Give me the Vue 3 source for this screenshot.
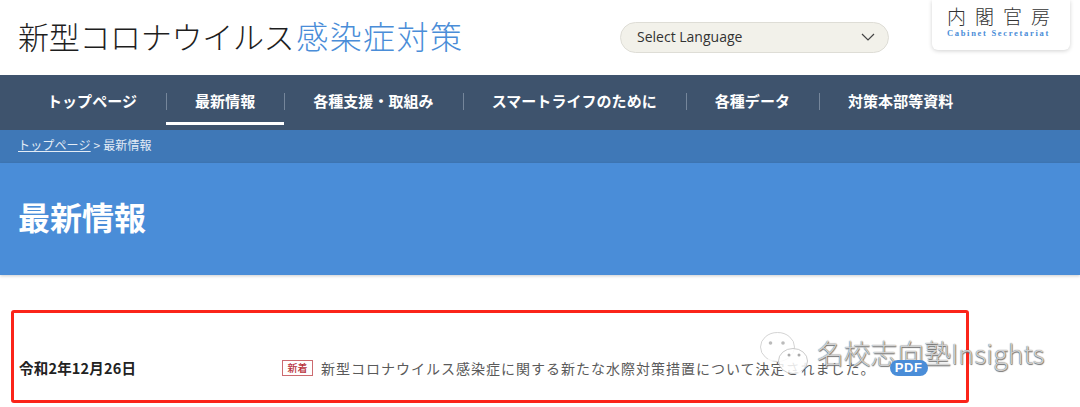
<script setup>
const navItems = [
  { label: 'トップページ' },
  { label: '最新情報', active: true },
  { label: '各種支援・取組み' },
  { label: 'スマートライフのために' },
  { label: '各種データ' },
  { label: '対策本部等資料' }
]
</script>

<template>
  <div class="page">
    <header class="top">
      <h1 class="site-title"><span class="t-dark">新型コロナウイルス</span><span class="t-blue">感染症対策</span></h1>
      <div class="lang">
        <span>Select Language</span>
        <svg width="14" height="8" viewBox="0 0 14 8"><path d="M1 1l6 6 6-6" fill="none" stroke="#444" stroke-width="1.2"/></svg>
      </div>
      <div class="logo">
        <div class="logo-ja">内閣官房</div>
        <div class="logo-en">Cabinet Secretariat</div>
      </div>
    </header>
    <nav class="nav">
      <a v-for="(n, i) in navItems" :key="n.label" class="nav-item" :class="{ active: n.active, first: i === 0 }">{{ n.label }}</a>
    </nav>
    <div class="crumb"><a class="crumb-link">トップページ</a> &gt; 最新情報</div>
    <section class="hero"><h2>最新情報</h2></section>
    <main class="list">
      <div class="date">令和2年12月26日</div>
      <div class="entry">
        <span class="tag">新着</span>
        <span class="entry-text">新型コロナウイルス感染症に関する新たな水際対策措置について決定されました。</span>
        <span class="pdf">PDF</span>
      </div>
    </main>

    <div class="redbox"></div>
    <div class="mark">
      <svg width="52" height="46" viewBox="0 0 52 46">
        <ellipse cx="17.500" cy="16" rx="17" ry="14.500" fill="#fff" fill-opacity=".72" stroke="#c9c9c9" stroke-width=".8"/>
        <path d="M8 27l-1 6 7-4z" fill="#fff" fill-opacity=".72"/>
        <ellipse cx="33" cy="30" rx="14.500" ry="12.500" fill="#fff" fill-opacity=".85" stroke="#bdbdbd" stroke-width=".8"/>
        <path d="M41 39l3 5-8-3z" fill="#fff" fill-opacity=".85"/>
        <circle cx="10.500" cy="12" r="1.800" fill="#bbb"/><circle cx="23" cy="12" r="1.800" fill="#bbb"/>
        <circle cx="29" cy="24" r="1.500" fill="#aaa"/><circle cx="39" cy="24" r="1.500" fill="#aaa"/>
      </svg>
      <span class="mark-text">名校志向塾Insights</span>
    </div>
  </div>
</template>

<style>
html, body { margin: 0; background: #fff; overflow: hidden; }
</style>

<style scoped>
.page {
  position: relative;
  width: 1080px;
  height: 407px;
  overflow: hidden;
  font-family: "Noto Sans CJK JP", "Noto Sans", sans-serif;
  color: #222;
}
.top {
  height: 75px;
  display: flex;
  align-items: flex-start;
  box-sizing: border-box;
  padding-left: 18px;
}
.site-title {
  margin: 12px 0 0;
  width: 602px;
  font-weight: 300;
  line-height: 46px;
  white-space: nowrap;
}
.t-dark { font-size: 31px; letter-spacing: -0.3px; color: #1e1e1e; }
.t-blue { font-size: 32px; letter-spacing: 1.400px; margin-left: 2px; color: #4a8dd8; }
.lang {
  margin-top: 22px;
  width: 269px;
  height: 31px;
  box-sizing: border-box;
  background: #f2f1ea;
  border: 1px solid #deddd6;
  border-radius: 16px;
  padding: 0 13px 2px 16px;
  display: flex;
  align-items: center;
  justify-content: space-between;
  font-family: "Open Sans", "Noto Sans", sans-serif;
  font-size: 14px;
  color: #333;
}
.logo {
  margin-left: 43px;
  width: 138px;
  height: 50px;
  box-sizing: border-box;
  background: #fff;
  border-radius: 0 0 6px 6px;
  box-shadow: 0 1px 4px rgba(0, 0, 0, .18);
  text-align: center;
  padding: 3px 5px 0 0;
}
.logo-ja {
  font-size: 19px;
  line-height: 26px;
  font-weight: 300;
  letter-spacing: 9px;
  margin-right: -9px;
  color: #333;
}
.logo-en {
  font-family: "Liberation Serif", serif;
  font-weight: 700;
  font-size: 8.500px;
  line-height: 9px;
  letter-spacing: 1.700px;
  color: #4a8dd8;
  white-space: nowrap;
}
.nav {
  height: 55px;
  background: #3e536d;
  display: flex;
  padding-left: 18px;
}
.nav-item {
  position: relative;
  display: flex;
  align-items: center;
  padding: 0 29px 3px;
  height: 54px;
  box-sizing: border-box;
  font-size: 15px;
  font-weight: 700;
  letter-spacing: .05px;
  color: #fff;
  white-space: nowrap;
}
.nav-item:not(.first)::before {
  content: "";
  position: absolute;
  left: 0;
  top: 18px;
  height: 17px;
  width: 1px;
  background: #75869b;
}
.nav-item.active::after {
  content: "";
  position: absolute;
  left: 0;
  right: 0;
  top: 47px;
  height: 3px;
  background: #fff;
}
.crumb {
  height: 33px;
  box-sizing: border-box;
  background: #3f78b7;
  padding-left: 18px;
  font-size: 12px;
  letter-spacing: .15px;
  line-height: 29px;
  color: #e3ecf6;
}
.crumb-link { text-decoration: underline; }
.hero {
  height: 112px;
  background: #4a8dd8;
  box-shadow: 0 1px 3px rgba(0, 0, 0, .2);
  padding-left: 18px;
  box-sizing: border-box;
}
.hero h2 {
  margin: 0;
  padding-top: 30px;
  font-size: 32px;
  line-height: 46px;
  font-weight: 700;
  color: #fff;
}
.list {
  display: flex;
  align-items: center;
  padding: 82px 0 0 19px;
  height: 21px;
}
.date {
  width: 263px;
  font-size: 14.500px;
  letter-spacing: .2px;
  font-weight: 700;
  color: #222;
  white-space: nowrap;
}
.entry { display: flex; align-items: center; white-space: nowrap; }
.tag {
  width: 31px;
  height: 16px;
  box-sizing: border-box;
  border: 1px solid #cc6b70;
  color: #b8323c;
  font-size: 10px;
  font-weight: 500;
  line-height: 14px;
  text-align: center;
}
.entry-text {
  margin-left: 8px;
  font-size: 14px;
  letter-spacing: 1px;
  color: #5a5a5a;
}
.pdf {
  position: relative;
  z-index: 2;
  margin-left: 14px;
  width: 38px;
  height: 16px;
  border-radius: 8px;
  background: #4a8dd8;
  color: #fff;
  font-size: 13px;
  font-weight: 700;
  letter-spacing: .5px;
  line-height: 15px;
  text-align: center;
  font-family: "Liberation Sans", sans-serif;
}
.redbox {
  position: absolute;
  left: 11px;
  top: 310px;
  width: 958px;
  height: 93px;
  box-sizing: border-box;
  border: 3px solid #fb2419;
  border-radius: 3px;
}
.mark {
  position: absolute;
  left: 760px;
  top: 331px;
  display: flex;
  align-items: flex-start;
}
.mark-text {
  margin-left: 5px;
  font-size: 26.800px;
  font-weight: 300;
  line-height: 44px;
  color: rgba(255, 255, 255, .72);
  white-space: nowrap;
  text-shadow: 0 0 1px #444, .5px .5px 1px #777;
}
</style>
